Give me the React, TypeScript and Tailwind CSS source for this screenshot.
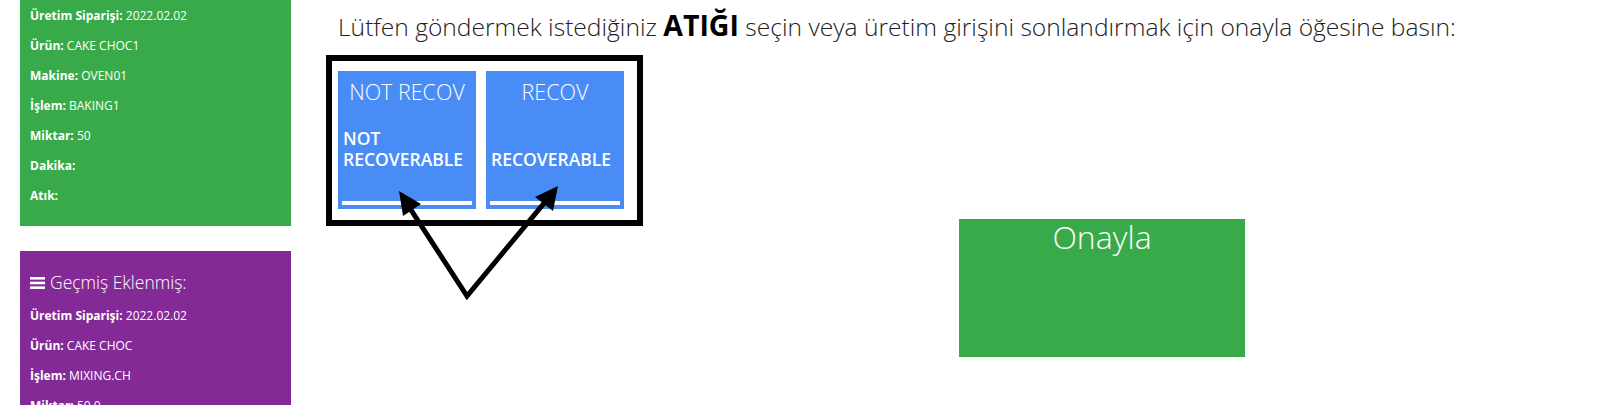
import React from 'react';

const font = { fontFamily: '"Open Sans", "Noto Sans", sans-serif' };

interface InfoRow {
  label: string;
  value?: string;
}

const currentRows: InfoRow[] = [
  { label: 'Üretim Siparişi:', value: '2022.02.02' },
  { label: 'Ürün:', value: 'CAKE CHOC1' },
  { label: 'Makine:', value: 'OVEN01' },
  { label: 'İşlem:', value: 'BAKING1' },
  { label: 'Miktar:', value: '50' },
  { label: 'Dakika:' },
  { label: 'Atık:' },
];

const historyRows: InfoRow[] = [
  { label: 'Üretim Siparişi:', value: '2022.02.02' },
  { label: 'Ürün:', value: 'CAKE CHOC' },
  { label: 'İşlem:', value: 'MIXING.CH' },
  { label: 'Miktar:', value: '50.0' },
];

const wasteOptions = [
  { code: 'NOT RECOV', name: 'NOT RECOVERABLE' },
  { code: 'RECOV', name: 'RECOVERABLE' },
];

function Row({ label, value }: InfoRow) {
  return (
    <div className="text-[12px] leading-[30px] text-white whitespace-nowrap">
      <span className="font-bold">{label}</span>
      {value && <span> {value}</span>}
    </div>
  );
}

function BarsIcon() {
  return (
    <svg width="15" height="12" viewBox="0 0 15 12" className="inline-block mr-[5px] -mt-[3px]">
      <rect x="0" y="0" width="15" height="2.6" fill="#fff" />
      <rect x="0" y="4.7" width="15" height="2.6" fill="#fff" />
      <rect x="0" y="9.4" width="15" height="2.6" fill="#fff" />
    </svg>
  );
}

function WasteTile({ code, name }: { code: string; name: string }) {
  return (
    <button
      type="button"
      className="flex flex-col w-[138px] h-[138px] bg-[#4a8cf6] text-white cursor-pointer"
    >
      <div className="pt-[7px] text-[21.5px] font-light leading-[28px] text-center whitespace-nowrap">{code}</div>
      <div className="flex flex-1 items-end px-[5px] pb-[31px] text-left text-[17.5px] font-semibold leading-[21px]">
        {name}
      </div>
      <div className="h-[4px] mx-[4px] mb-[4px] bg-white" />
    </button>
  );
}

function Arrows() {
  return (
    <svg
      className="absolute left-0 top-0 pointer-events-none"
      width="1613"
      height="405"
      viewBox="0 0 1613 405"
    >
      <polyline
        points="410.8,209.6 467,296 544.1,203.1"
        fill="none"
        stroke="#000"
        strokeWidth="5"
        strokeLinejoin="miter"
      />
      <polygon points="399,191 421,204 403,216" fill="#000" />
      <polygon points="558,186 553,211 535,197" fill="#000" />
    </svg>
  );
}

export default function App() {
  return (
    <div className="relative flex h-[405px] overflow-hidden bg-white" style={font}>
      <aside className="ml-[20px] w-[271px] shrink-0">
        <div className="bg-[#39aa49] pt-[1px] pb-[15px] pl-[10px]">
          {currentRows.map((r) => (
            <Row key={r.label} {...r} />
          ))}
        </div>
        <div className="mt-[25px] bg-[#842a97] pt-[16px] pb-[20px] pl-[10px]">
          <div className="text-[17.5px] font-light leading-[30px] text-white mb-[4px]">
            <BarsIcon />
            Geçmiş Eklenmiş:
          </div>
          {historyRows.map((r) => (
            <Row key={r.label} {...r} />
          ))}
        </div>
      </aside>

      <main className="ml-[35px] flex-1">
        <h2 className="mt-[9px] h-[36px] pl-[12px] text-[24.6px] font-light leading-[36px] text-[#222] whitespace-nowrap">
          Lütfen göndermek istediğiniz <span className="font-bold text-[28.5px] leading-[0] text-black">ATIĞI</span> seçin veya üretim girişini sonlandırmak için onayla öğesine basın:
        </h2>
        <div className="mt-[10px] flex items-start">
          <div className="flex gap-[10px] border-[6px] border-black pt-[10px] pl-[6px] pr-[13px] pb-[11px]">
            {wasteOptions.map((w) => (
              <WasteTile key={w.code} {...w} />
            ))}
          </div>
          <button
            type="button"
            className="ml-[316px] mt-[164px] w-[286px] h-[138px] bg-[#39aa49] text-white text-[32px] font-light leading-[36px] flex justify-center items-start cursor-pointer"
          >
            Onayla
          </button>
        </div>
      </main>

      <Arrows />
    </div>
  );
}
